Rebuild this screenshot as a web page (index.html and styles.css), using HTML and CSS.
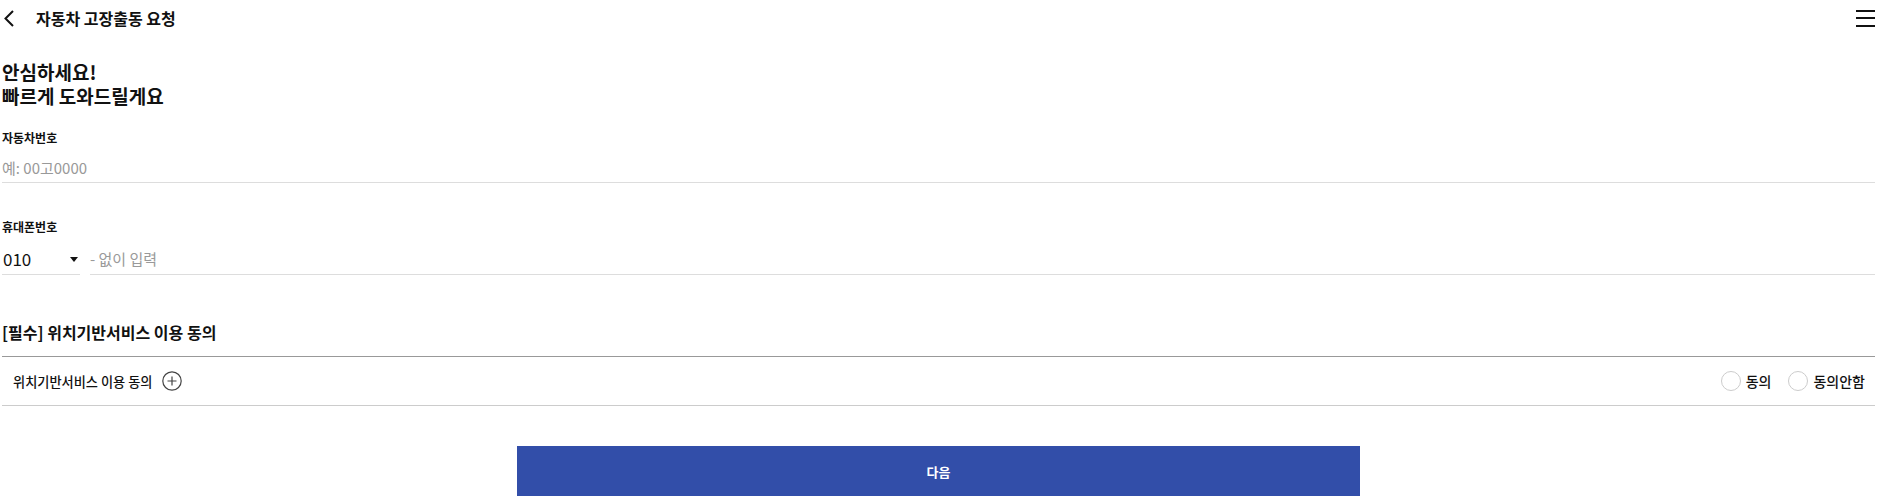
FILE: index.html
```html
<!DOCTYPE html>
<html>
  <head>
    <meta charset="utf-8" />
    <title>자동차 고장출동 요청</title>
    <meta name="viewport" content="width=device-width, initial-scale=1.0" />
    <link rel="stylesheet" href="styles.css">
  </head>
  <body>
    <div class="page">
      <header class="top-bar">
        <a class="back" href="#">
          <svg width="12" height="17" viewBox="0 0 12 17"><path d="M10 1 L2.5 8.5 L10 16" fill="none" stroke="#111" stroke-width="2"/></svg>
        </a>
        <h1 class="title">자동차 고장출동 요청</h1>
        <button class="menu" type="button"><span></span><span></span><span></span></button>
      </header>

      <h2 class="intro">안심하세요!<br>빠르게 도와드릴게요</h2>

      <div class="field car-field">
        <label class="field-label" for="carno">자동차번호</label>
        <input class="text-input" id="carno" type="text" placeholder="예: 00고0000" />
      </div>

      <div class="field phone-field">
        <label class="field-label" for="phone">휴대폰번호</label>
        <div class="phone-row">
          <div class="select-wrap">
            <select class="phone-select">
              <option>010</option>
              <option>011</option>
              <option>016</option>
              <option>017</option>
            </select>
          </div>
          <input class="text-input" id="phone" type="tel" placeholder="- 없이 입력" />
        </div>
      </div>

      <section class="agree">
        <h3 class="agree-title">[필수] 위치기반서비스 이용 동의</h3>
        <div class="agree-row">
          <span class="agree-name">위치기반서비스 이용 동의</span>
          <button class="more" type="button">
            <svg width="20" height="20" viewBox="0 0 20 20"><circle cx="10" cy="10" r="9.2" fill="none" stroke="#444" stroke-width="1.2"/><path d="M10 5.5 V14.5 M5.5 10 H14.5" stroke="#444" stroke-width="1.2"/></svg>
          </button>
          <div class="choices">
            <label class="choice"><input type="radio" name="loc" /> 동의</label>
            <label class="choice"><input type="radio" name="loc" /> 동의안함</label>
          </div>
        </div>
      </section>

      <button class="next" type="button">다음</button>
    </div>
  </body>
</html>
```

FILE: styles.css
```css
body {
  margin: 0;
  font-family: "Noto Sans CJK KR", "Noto Sans", sans-serif;
  color: #111;
  background: #fff;
}
.page {
  margin: 0 11px 0 2px;
}

/* top bar */
.top-bar {
  display: flex;
  align-items: center;
  height: 36px;
}
.back {
  display: flex;
  margin-left: 1px;
}
.title {
  margin: 0 0 0 21px;
  font-size: 16px;
  font-weight: 700;
}
.menu {
  margin-left: auto;
  width: 19px;
  height: 17px;
  padding: 0;
  border: 0;
  background: none;
  display: flex;
  flex-direction: column;
  justify-content: space-between;
}
.menu span {
  display: block;
  height: 2px;
  background: #111;
}

/* intro */
.intro {
  margin: 24px 0 0;
  font-size: 19px;
  line-height: 24px;
  font-weight: 700;
}

/* fields */
.field-label {
  display: block;
  font-size: 12px;
  line-height: 16px;
  font-weight: 700;
}
.car-field {
  margin-top: 22px;
}
.phone-field {
  margin-top: 36px;
}
.text-input {
  display: block;
  width: 100%;
  box-sizing: border-box;
  height: 31px;
  margin-top: 6px;
  padding: 0;
  border: 0;
  border-bottom: 1px solid #ddd;
  font-family: inherit;
  font-size: 15px;
  color: #111;
  outline: none;
}
.text-input::placeholder {
  color: #999;
}
.phone-row {
  display: flex;
  gap: 10px;
  margin-top: 8px;
}
.phone-row .text-input {
  flex: 1;
  margin-top: 0;
  height: 32px;
}
.select-wrap {
  position: relative;
  width: 78px;
  border-bottom: 1px solid #ddd;
}
.select-wrap::after {
  content: "";
  position: absolute;
  right: 2px;
  top: 14px;
  border-left: 4px solid transparent;
  border-right: 4px solid transparent;
  border-top: 5px solid #111;
}
.phone-select {
  appearance: none;
  width: 100%;
  height: 31px;
  padding: 0 0 0 1px;
  border: 0;
  background: none;
  font-family: inherit;
  font-size: 17px;
  color: #111;
}

/* agreement */
.agree {
  margin-top: 46px;
}
.agree-title {
  margin: 0;
  padding-bottom: 13px;
  font-size: 16px;
  line-height: 22px;
  font-weight: 700;
  border-bottom: 1px solid #999;
}
.agree-row {
  display: flex;
  align-items: center;
  height: 48px;
  padding: 0 10px 0 11px;
  border-bottom: 1px solid #ccc;
}
.agree-name {
  font-size: 13.2px;
  font-weight: 500;
}
.more {
  display: flex;
  margin-left: 10px;
  padding: 0;
  border: 0;
  background: none;
}
.choices {
  margin-left: auto;
  display: flex;
  gap: 17px;
}
.choice {
  display: flex;
  align-items: center;
  gap: 5px;
  font-size: 14px;
  font-weight: 500;
}
.choice input {
  appearance: none;
  width: 20px;
  height: 20px;
  margin: 0;
  border: 1px solid #ccc;
  border-radius: 50%;
  background: #fff;
}

/* next button */
.next {
  display: block;
  width: 45%;
  height: 50px;
  margin: 40px auto 0;
  border: 0;
  background: #324ea9;
  color: #fff;
  font-family: inherit;
  font-size: 13px;
  font-weight: 700;
}
```
